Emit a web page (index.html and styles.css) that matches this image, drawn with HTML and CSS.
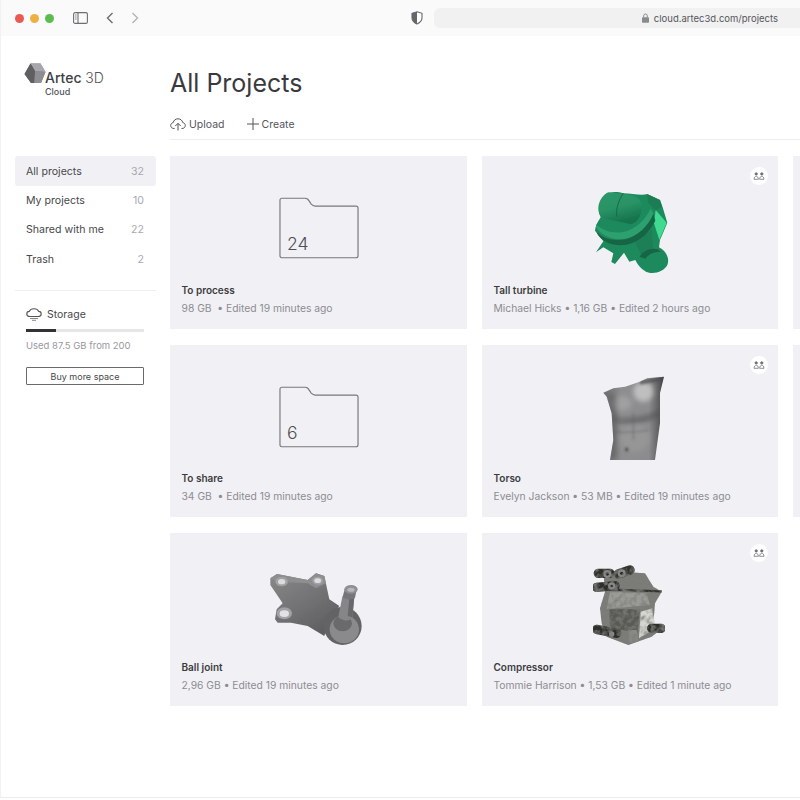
FILE: index.html
```html
<!DOCTYPE html>
<html lang="en">
<head>
<meta charset="utf-8">
<title>All Projects</title>
<link rel="stylesheet" href="styles.css">
</head>
<body>
<svg class="defs" width="0" height="0" aria-hidden="true">
  <defs>
    <filter id="soft" x="-10%" y="-10%" width="120%" height="120%"><feGaussianBlur stdDeviation="1.800"/></filter>
    <filter id="soft2" x="-30%" y="-30%" width="160%" height="160%"><feGaussianBlur stdDeviation="8"/></filter>
    <filter id="soft3" x="-30%" y="-30%" width="160%" height="160%"><feGaussianBlur stdDeviation="3"/></filter>
    <filter id="logo-blur" x="-10%" y="-10%" width="120%" height="120%"><feGaussianBlur stdDeviation=".35"/></filter>
    <filter id="grit" x="-5%" y="-5%" width="110%" height="110%">
      <feTurbulence type="fractalNoise" baseFrequency=".07" numOctaves="2" seed="7" result="n"/>
      <feColorMatrix in="n" type="matrix" values="0 0 0 0 .2  0 0 0 0 .2  0 0 0 0 .19  2.200 0 0 0 -.85" result="spots"/>
      <feComposite in="spots" in2="SourceAlpha" operator="in" result="clip"/>
      <feMerge result="m"><feMergeNode in="SourceGraphic"/><feMergeNode in="clip"/></feMerge>
      <feGaussianBlur in="m" stdDeviation="2"/>
    </filter>
    <linearGradient id="cyl" x1="0" y1="0" x2=".35" y2="1"><stop offset="0" stop-color="#2c9869"/><stop offset=".55" stop-color="#299365"/><stop offset="1" stop-color="#16734c"/></linearGradient>
    <linearGradient id="torso" x1="0" y1="0" x2="1" y2="0"><stop offset="0" stop-color="#6e6e70"/><stop offset=".3" stop-color="#8e8e90"/><stop offset=".75" stop-color="#8c8c8e"/><stop offset=".92" stop-color="#5e5e60"/><stop offset="1" stop-color="#3e3e40"/></linearGradient>
    <linearGradient id="metal" x1="0" y1="0" x2=".7" y2="1"><stop offset="0" stop-color="#888"/><stop offset=".6" stop-color="#707072"/><stop offset="1" stop-color="#5e5e60"/></linearGradient>
    <symbol id="folder" viewBox="0 0 82 64"><path d="M3 1h24c2 0 3 1 4 3l2 3c1 1 2 2 4 2h42c1.500 0 2 .8 2 2v49c0 1.500-.8 2-2 2H3c-1.500 0-2-.8-2-2V3c0-1.200.8-2 2-2z" fill="none" stroke="#77777d" stroke-width="1.200"/></symbol>
    <symbol id="people" viewBox="0 0 12 8"><g fill="#77777b" stroke="#66666a" stroke-width=".7"><circle cx="3.200" cy="1.900" r="1.200"/><path d="M1 7.300c.2-2 .9-3 2.200-3s2 1 2.200 3z" fill="none"/><circle cx="8.800" cy="1.900" r="1.200"/><path d="M6.600 7.300c.2-2 .9-3 2.200-3s2 1 2.200 3z" fill="none"/></g></symbol>
  </defs>
</svg>
<div class="window">
  <header class="toolbar">
    <span class="light light-red"></span>
    <span class="light light-yellow"></span>
    <span class="light light-green"></span>
    <svg class="tool-sidebar" width="15" height="12" viewBox="0 0 15 12"><rect x=".6" y=".6" width="13.800" height="10.800" rx="1.500" fill="none" stroke="#6e6e72" stroke-width="1.100"/><path d="M5 .6v10.800" stroke="#6e6e72" stroke-width="1.100"/><path d="M2 3h1.600M2 5h1.600M2 7h1.600" stroke="#8a8a8e"/></svg>
    <svg class="tool-back" width="8" height="12" viewBox="0 0 8 12"><path d="M6.500 1L1.500 6l5 5" fill="none" stroke="#6e6e72" stroke-width="1.400"/></svg>
    <svg class="tool-forward" width="8" height="12" viewBox="0 0 8 12"><path d="M1.500 1l5 5-5 5" fill="none" stroke="#b4b4b8" stroke-width="1.400"/></svg>
    <svg class="tool-shield" width="12" height="14" viewBox="0 0 12 14"><path d="M6 .8l5 1.500v4.500c0 3-2.200 5-5 6.300C3.200 11.800 1 9.800 1 6.800V2.300z" fill="#fff" stroke="#66666a" stroke-width="1.100"/><path d="M6 .8L1 2.300v4.500c0 3 2.200 5 5 6.300z" fill="#66666a"/></svg>
    <div class="urlbar">
      <svg class="lock" width="7" height="10" viewBox="0 0 7 10"><path d="M1.700 4.500V2.800a1.800 1.800 0 013.600 0v1.700" fill="none" stroke="#8a8a8e"/><rect y="4.200" width="7" height="5.500" rx=".8" fill="#8a8a8e"/></svg>
      <span>cloud.artec3d.com/projects</span>
    </div>
  </header>
  <div class="app">
    <aside class="sidebar">
      <div class="logo">
        <svg class="logo-mark" width="22" height="21" viewBox="0 0 22 21"><g filter="url(#logo-blur)"><path d="M6.500.5h10L21.500 9l-4.500 11H7L.5 11z" fill="#7a7a7e"/><path d="M6.500.5h10L21.500 9 11 8z" fill="#a8a8ac"/><path d="M11 8l10.500 1L17 20H10z" fill="#8e8e92"/><path d="M.5 11L6.500.5 11 8l-1 12H7z" fill="#5e5e62"/></g></svg>
        <div class="logo-text">
          <div class="logo-name">Artec <span class="logo-3d">3D</span></div>
          <div class="logo-sub">Cloud</div>
        </div>
      </div>
      <nav class="nav">
        <a class="nav-item is-active"><span>All projects</span><span class="count">32</span></a>
        <a class="nav-item"><span>My projects</span><span class="count">10</span></a>
        <a class="nav-item"><span>Shared with me</span><span class="count">22</span></a>
        <a class="nav-item"><span>Trash</span><span class="count">2</span></a>
      </nav>
      <div class="storage">
        <div class="storage-head">
          <svg width="16" height="13" viewBox="0 0 16 13"><path d="M4 8.500C2 8.500.8 7.400.8 5.900c0-1.400 1-2.400 2.500-2.500C3.900 1.800 5.800.7 8 .7s4.100 1.100 4.700 2.700c1.500.1 2.500 1.100 2.500 2.500 0 1.500-1.200 2.600-3.200 2.600z" fill="none" stroke="#55555a" stroke-width="1.100"/><path d="M4 10.500h8M6 12.300h4" stroke="#8a8a8e"/></svg>
          <span>Storage</span>
        </div>
        <div class="meter"><div class="meter-fill"></div></div>
        <div class="storage-used">Used 87.5 GB from 200</div>
        <button class="buy">Buy more space</button>
      </div>
    </aside>
    <main class="main">
      <h1 class="title">All Projects</h1>
      <div class="actions">
        <a class="action">
          <svg width="16" height="13" viewBox="0 0 16 13"><path d="M4.500 10.500H4C2 10.500.7 9.200.7 7.500c0-1.500 1-2.700 2.500-2.900C3.700 2.300 5.600.8 8 .8s4.300 1.500 4.800 3.800c1.500.2 2.500 1.400 2.500 2.900 0 1.700-1.300 3-3.300 3h-.5" fill="none" stroke="#55555a" stroke-width="1"/><path d="M8 12.500V5.500M5.300 8L8 5.300 10.700 8" fill="none" stroke="#55555a" stroke-width="1"/></svg>
          <span>Upload</span>
        </a>
        <a class="action">
          <svg width="12" height="12" viewBox="0 0 12 12"><path d="M6 0v12M0 6h12" stroke="#55555a" stroke-width="1"/></svg>
          <span>Create</span>
        </a>
      </div>
      <section class="grid">
        <article class="card">
          <div class="thumb"><div class="folder"><svg class="folder-shape" width="80" height="63"><use href="#folder"/></svg><span class="folder-count">24</span></div></div>
          <div class="info"><div class="name">To process</div><div class="meta">98 GB &nbsp;•&nbsp;Edited 19 minutes ago</div></div>
        </article>
        <article class="card">
          <span class="badge"><svg width="12" height="8"><use href="#people"/></svg></span>
          <div class="thumb">
            <svg class="model" width="140" height="110" viewBox="560 174 140 110">
              <g transform="translate(560 160) scale(.3333)">
                <g filter="url(#soft)">
                  <path d="M105 212C108 190 118 180 122 172 112 150 115 125 135 105 150 93 175 95 190 100 215 100 245 108 262 102L300 120 308 142 322 188 300 240 297 262C318 272 330 295 322 315 312 335 280 345 258 335 240 325 232 312 226 300L208 305 192 278 165 312 154 306 160 280 130 262 108 277 130 244z" fill="#1e8a5c"/>
                  <path d="M262 103l38 17 6 20-20 12-22-25z" fill="#1a7d54"/>
                  <path d="M287 150l33 38-22 52-16-50z" fill="#3fdb91"/>
                  <path d="M112 222c20 30 60 40 96 30 34-10 60-34 78-70l-6-20c-16 36-50 68-84 76-34 6-70-2-84-22z" fill="#126645"/>
                  <path d="M108 200c14 24 46 42 88 36 36-6 70-38 84-76l-8-14c-14 30-44 62-82 70-34 6-66-6-82-24z" fill="#2fa070"/>
                  <path d="M145 97c-16 6-30 28-30 48 0 20 10 30 24 32l74 16c20-4 34-30 32-56-2-18-14-28-30-32z" fill="url(#cyl)"/>
                  <path d="M190 100c-14 20-22 44-20 70" stroke="#136a47" stroke-width="3" fill="none"/>
                  <path d="M225 250l50-40 5 60-30 25z" fill="#1a7f54"/>
                  <path d="M238 290c12-16 34-28 56-22l8 8c-20-2-36 6-46 20z" fill="#136645"/>
                </g>
              </g>
            </svg>
          </div>
          <div class="info"><div class="name">Tall turbine</div><div class="meta">Michael Hicks • 1,16 GB • Edited 2 hours ago</div></div>
        </article>
        <article class="card"></article>
        <article class="card">
          <div class="thumb"><div class="folder"><svg class="folder-shape" width="80" height="63"><use href="#folder"/></svg><span class="folder-count">6</span></div></div>
          <div class="info"><div class="name">To share</div><div class="meta">34 GB &nbsp;•&nbsp;Edited 19 minutes ago</div></div>
        </article>
        <article class="card">
          <span class="badge"><svg width="12" height="8"><use href="#people"/></svg></span>
          <div class="thumb">
            <svg class="model" width="140" height="110" viewBox="560 363 140 110">
              <g transform="translate(560 350) scale(.3333)">
                <clipPath id="torso-clip"><path d="M130 128l30-13 35-5 45-15 22-10 50-5-12 50 0 90-15 110-135 0 10-60-5-80-15-50z"/></clipPath>
                <g filter="url(#soft)">
                  <path d="M130 128l30-13 35-5 45-15 22-10 50-5-12 50 0 90-15 110-135 0 10-60-5-80-15-50z" fill="url(#torso)"/>
                </g>
                <g clip-path="url(#torso-clip)">
                  <g filter="url(#soft2)">
                    <ellipse cx="250" cy="125" rx="30" ry="30" fill="#c8c8c8" opacity=".85"/>
                    <ellipse cx="185" cy="160" rx="30" ry="22" fill="#a8a8a8" opacity=".7"/>
                    <ellipse cx="225" cy="265" rx="45" ry="40" fill="#9c9c9c" opacity=".6"/>
                    <path d="M145 130l25 5 0 190-20 5z" fill="#505052" opacity=".5"/>
                    <path d="M160 200c40 10 90 0 140-20l0 20c-50 20-100 25-140 10z" fill="#4c4c4e" opacity=".55"/>
                  </g>
                  <g filter="url(#soft3)">
                    <path d="M165 215c30 8 60-2 105-8M165 245c30 5 60 0 100-4" fill="none" stroke="#666668" stroke-width="4" opacity=".6"/>
                    <path d="M220 190v80" stroke="#606062" stroke-width="4" opacity=".5"/>
                    <ellipse cx="200" cy="298" rx="4" ry="6" fill="#404042"/>
                    <path d="M240 90l70-8-4 10-66 12z" fill="#4a4a4c" opacity=".7"/>
                  </g>
                </g>
              </g>
            </svg>
          </div>
          <div class="info"><div class="name">Torso</div><div class="meta">Evelyn Jackson • 53 MB • Edited 19 minutes ago</div></div>
        </article>
        <article class="card"></article>
        <article class="card">
          <div class="thumb">
            <svg class="model" width="140" height="110" viewBox="248 551 140 110">
              <g transform="translate(240 560) scale(.3333)">
                <g filter="url(#soft)">
                  <path d="M88 55l20-13 92 18 25-20 25 8 15 70 30 20-30 40-15 50-50-30-50-10-40 0-8-10 5-30 18-18-37-55z" fill="url(#metal)"/>
                  <path d="M88 55l20-13 92 18 25-20 25 8 5 22-30 15-25-15-90-5z" fill="#8e8e90"/>
                  <ellipse cx="122" cy="65" rx="19" ry="14" fill="#a2a2a4"/><ellipse cx="122" cy="65" rx="11" ry="8" fill="#dcdce0"/>
                  <ellipse cx="230" cy="62" rx="16" ry="12" fill="#a2a2a4"/><ellipse cx="230" cy="62" rx="10" ry="7" fill="#dcdce0"/>
                  <ellipse cx="130" cy="160" rx="23" ry="18" fill="#a2a2a4"/><ellipse cx="130" cy="161" rx="14" ry="10" fill="#e2e2e6"/>
                  <circle cx="305" cy="198" r="57" fill="#646466"/>
                  <ellipse cx="310" cy="208" rx="44" ry="42" fill="#8a8a8c"/>
                  <ellipse cx="305" cy="190" rx="28" ry="24" fill="#6a6a6c"/>
                  <path d="M292 170l12-60c8-8 28-8 36 0l-6 65c-10 10-32 8-42-5z" fill="#868688"/>
                  <path d="M320 168l6-60 14 2-6 62z" fill="#68686a"/>
                  <path d="M305 110l7-25 36 0-6 28c-10 8-28 6-37-3z" fill="#767678"/>
                  <ellipse cx="330" cy="88" rx="20" ry="13" fill="#909092"/>
                  <ellipse cx="330" cy="89" rx="11" ry="6" fill="#b8b8ba"/>
                </g>
              </g>
            </svg>
          </div>
          <div class="info"><div class="name">Ball joint</div><div class="meta">2,96 GB • Edited 19 minutes ago</div></div>
        </article>
        <article class="card">
          <span class="badge"><svg width="12" height="8"><use href="#people"/></svg></span>
          <div class="thumb">
            <svg class="model" width="140" height="110" viewBox="560 551 140 110">
              <g transform="translate(570 550) scale(.3333)">
                <g filter="url(#grit)">
                  <path d="M100 62l125 8 25 40 25 15-20 35-5 60 20 20-25 20-70 25-65-25-15-40-5-45 15-50z" fill="#7c7c78"/>
                  <path d="M120 125l110 5 10 35-130 12z" fill="#9a9a96"/>
                  <path d="M118 178l92 0-8 70-82-15z" fill="#5a5a54"/>
                  <path d="M212 185l35-10 10 60-50 30z" fill="#d6d6d0"/>
                  <path d="M110 118l165 6" stroke="#333331" stroke-width="7"/>
                  <path d="M85 70l35 0M145 72l35-12M80 112l55-5M80 238l60 12M245 235l28 0" stroke="#2e2e2c" stroke-width="28" stroke-linecap="round"/>
                  <circle cx="112" cy="72" r="12" fill="#8a8a86"/><circle cx="155" cy="70" r="12" fill="#8a8a86"/><circle cx="125" cy="108" r="11" fill="#8a8a86"/><circle cx="125" cy="252" r="8" fill="#8a8a86"/>
                  <circle cx="112" cy="72" r="5" fill="#2c2c2a"/><circle cx="155" cy="70" r="5" fill="#2c2c2a"/><circle cx="125" cy="108" r="4" fill="#2c2c2a"/>
                  <path d="M175 240l25 0 5 35-25 5z" fill="#8a8a84"/>
                </g>
              </g>
            </svg>
          </div>
          <div class="info"><div class="name">Compressor</div><div class="meta">Tommie Harrison • 1,53 GB • Edited 1 minute ago</div></div>
        </article>
      </section>
    </main>
  </div>
</div>
</body>
</html>
```
FILE: styles.css
```css
* { box-sizing: border-box; }
html, body { margin: 0; height: 100%; overflow: hidden; background: #fff; }
body { font-family: Inter, "Liberation Sans", sans-serif; color: #3c3c40; }
.defs { position: absolute; }
.window { height: 798px; border-left: 1px solid #f2f2f2; border-bottom: 1px solid #ececec; overflow: hidden; }

.toolbar { height: 36px; background: #fafafa; display: flex; align-items: center; padding-left: 14px; }
.light { width: 9px; height: 9px; border-radius: 50%; margin-right: 6px; }
.light-red { background: #e95a52; }
.light-yellow { background: #eeb040; }
.light-green { background: #5cbc4e; }
.tool-sidebar { margin-left: 13px; }
.tool-back { margin-left: 18px; }
.tool-forward { margin-left: 17px; }
.tool-shield { margin-left: 272px; }
.urlbar { margin-left: 11px; flex: 1; height: 20px; background: #f1f1f1; border-radius: 6px 0 0 6px; display: flex; align-items: center; justify-content: flex-end; padding-right: 22px; gap: 5px; font-size: 9.500px; color: #55555a; }

.app { display: flex; }
.sidebar { width: 169px; flex: none; padding: 27px 14px 0 14px; }
.logo { height: 93px; display: flex; align-items: flex-start; padding-left: 9px; }
.logo-text { margin: 7px 0 0 -1px; }
.logo-name { font-size: 14px; line-height: 16px; color: #3e3e42; font-weight: 500; white-space: nowrap; }
.logo-3d { font-weight: 300; color: #55555a; }
.logo-sub { font-size: 9px; line-height: 11px; font-weight: 500; color: #55555a; }

.nav-item { display: flex; justify-content: space-between; align-items: center; height: 29.500px; padding: 0 12px 0 11px; font-size: 10.600px; color: #48484c; border-radius: 3px; }
.nav-item.is-active { background: #f1f1f5; height: 30px; margin-bottom: -.5px; }
.count { color: #a8a8ae; }

.storage { margin-top: 16px; border-top: 1px solid #efeff1; padding: 15px 12px 0 11px; }
.storage-head { display: flex; align-items: center; gap: 5px; height: 16px; font-size: 10.500px; color: #48484c; }
.meter { height: 3px; margin-top: 7px; background: #e6e6e8; }
.meter-fill { width: 30px; height: 100%; background: #333337; }
.storage-used { margin-top: 7px; font-size: 9.500px; line-height: 14px; color: #98989e; white-space: nowrap; }
.buy { display: block; width: 100%; height: 18px; margin-top: 14px; padding: 0; background: #fff; border: 1px solid #6a6a6e; border-radius: 1px; font: 400 9px Inter, "Liberation Sans", sans-serif; color: #48484c; }

.main { flex: 1; min-width: 0; padding-top: 31px; }
.title { margin: 0 0 9px; font-size: 25px; line-height: 32px; font-weight: 400; color: #3a3a3e; }
.actions { display: flex; gap: 22px; height: 32px; padding-top: 1px; align-items: center; border-bottom: 1px solid #ededef; font-size: 10.500px; color: #55555a; }
.action { display: flex; align-items: center; gap: 3px; }

.grid { margin-top: 16px; display: grid; grid-template-columns: 297px 296px 297px; grid-auto-rows: 172.500px; gap: 16px 15px; }
.card { position: relative; background: #f1f1f5; display: flex; flex-direction: column; min-width: 0; }
.card:nth-child(9) { display: none; }
.thumb { height: 146px; flex: none; display: flex; align-items: center; justify-content: center; margin-bottom: -20.500px; }
.model { display: block; overflow: visible; }
.folder { position: relative; width: 80px; height: 63px; margin-left: 1px; margin-top: -1px; }
.folder-shape { display: block; }
.folder-count { position: absolute; left: 8px; bottom: 6px; font-size: 17.500px; line-height: 20px; font-weight: 300; color: #4e4e52; }
.info { padding: 0 11.500px; }
.name { font-size: 10px; line-height: 16px; font-weight: 600; color: #3c3c40; }
.meta { margin-top: 2px; font-size: 10.300px; line-height: 16px; color: #8c8c92; white-space: nowrap; }
.badge { position: absolute; top: 11px; right: 10px; width: 18px; height: 18px; border-radius: 50%; background: #fff; display: flex; align-items: center; justify-content: center; }
```
